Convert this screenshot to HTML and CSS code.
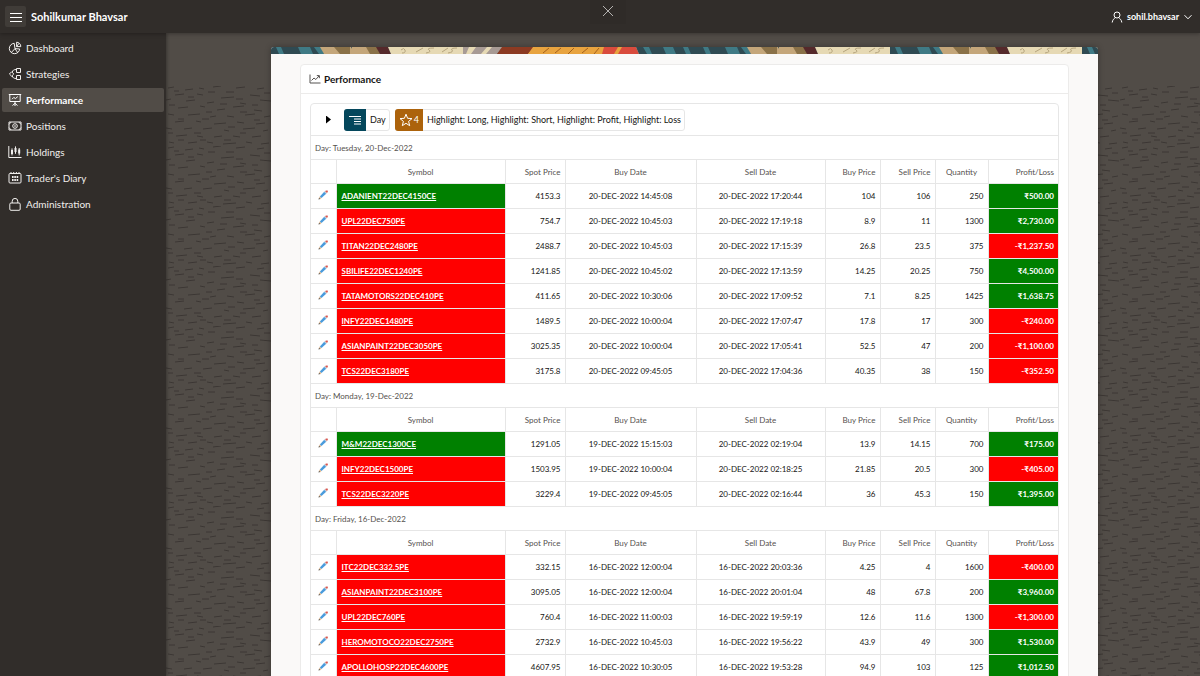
FILE: index.html
```
<!DOCTYPE html>
<html lang="en">
<head>
    <meta charset="UTF-8">
    <meta name="viewport" content="width=device-width, initial-scale=1.0">
    <title>Performance</title>
    <link rel="stylesheet" href="styles.css">
</head>
<body>

    <!-- Shared icons -->
    <svg class="sprite" aria-hidden="true">
        <symbol id="pencil" viewBox="0 0 10 10">
            <path d="M.4 9.6 1.1 7.4 2.6 8.9z" fill="#6b6258"/>
            <path d="M1.1 7.4 1.9 6.5 3.5 8.1 2.6 8.9z" fill="#e5b98a"/>
            <path d="M1.9 6.5 6.2 1.8 8.2 3.8 3.5 8.1z" fill="#4a9bdc"/>
            <path d="M6.2 1.8 7 1 9 3 8.2 3.8z" fill="#b9c3cc"/>
            <path d="M7 1Q8.2 0 9.4.6T9 3z" fill="#d9574f"/>
        </symbol>
    </svg>

    <!-- Header -->
    <header class="navbar">
        <button class="menu-btn" aria-label="Toggle menu">
            <svg viewBox="0 0 14 14"><path d="M1 3.5h12M1 7.5h12M1 11.5h12"/></svg>
        </button>
        <a class="logo" href="#">Sohilkumar Bhavsar</a>
        <button class="user-btn">
            <svg viewBox="0 0 12 12"><circle cx="6" cy="4" r="3"/><path d="M1.2 11.5C1.6 8.6 3 7.6 4.4 6.7M10.8 11.5C10.4 8.6 9 7.6 7.6 6.7"/></svg>
            sohil.bhavsar
            <svg class="caret" viewBox="0 0 10 10"><path d="M1.5 3.2 5 6.8 8.5 3.2"/></svg>
        </button>
        <button class="close-btn" aria-label="Close">
            <svg viewBox="0 0 12 12"><path d="M1 1 11 11M11 1 1 11"/></svg>
        </button>
    </header>

    <div class="layout">

        <!-- Sidebar -->
        <nav class="sidebar">
            <a href="#">
                <svg viewBox="0 0 14 14"><path d="M6.2 2.3A5.2 5.2 0 1 0 11.7 8L7 7.6zM7 7.6 3.4 11.4M7 7.6 9.8 11.9M8.6 1.2V5.6H12.8A4.3 4.3 0 0 0 8.6 1.2zM8.6 5.6 11 2.3"/></svg>
                Dashboard
            </a>
            <a href="#">
                <svg viewBox="0 0 14 14"><path d="M8.5 1.5h4v4h-4zM8.5 8.5h4v4h-4zM3.6 4.8 5.8 7 3.6 9.2 1.4 7zM4.3 5.2C4.6 3.2 5.8 2.5 8.5 2.5M4.3 8.8C4.6 10.8 5.8 11.5 8.5 11.5"/></svg>
                Strategies
            </a>
            <a href="#" class="active">
                <svg viewBox="0 0 14 14"><path d="M.8 1.5h12.4M1.8 1.5v7h10.4v-7M7 8.5v4.5M4.5 12.5 7 10.3l2.5 2.2M4 6.2 5.8 4.4 7.4 5.6 9.8 3.6"/></svg>
                Performance
            </a>
            <a href="#">
                <svg viewBox="0 0 14 14"><path d="M1 3h12v8H1zM1 5.4 3.2 3M13 5.4 10.8 3M1 8.6 3.2 11M13 8.6 10.8 11"/><circle cx="7" cy="7" r="2.3"/><path d="M7 6v2"/></svg>
                Positions
            </a>
            <a href="#">
                <svg viewBox="0 0 14 14"><path d="M.8 1v11.5h12.7M4 3.4v7M7.5 1.4v7.4M11.2 3v7.4"/><path class="solid" d="M3 5h2v4H3zM6.5 3h2v4h-2zM10.2 4.6h2v4h-2z"/></svg>
                Holdings
            </a>
            <a href="#">
                <svg viewBox="0 0 14 14"><rect x="1" y="2.5" width="12" height="9.5" rx="1"/><path d="M3 1v2M5.7 1v2M8.4 1v2M11 1v2"/><path d="M4 6h6.2M4 9h6.2" stroke-width="2" stroke-dasharray="1.6 .7"/></svg>
                Trader's Diary
            </a>
            <a href="#">
                <svg viewBox="0 0 14 14"><rect x="1.8" y="6" width="10.4" height="7.3" rx="1.2"/><path d="M4.2 6V4.2a2.8 2.8 0 0 1 5.6 0V6"/></svg>
                Administration
            </a>
        </nav>

        <!-- Main content -->
        <main class="main-content">
            <svg class="texture" aria-hidden="true">
                <defs>
                    <pattern id="dashes" width="106" height="60" patternUnits="userSpaceOnUse">
                        <path d="M2 2l6-1M19 4l8-1M33 2l5 1M47 1l8-1M70 2l9-1M91 3l7-1M9 9l9-1M31 8l6 1M55 12l13-1M84 9l10 1M0 14l5-1M20 15l9-1M41 17l7-1M74 17l6 1M94 14l11 1M12 22l10-1M34 20l5 1M51 24l8-1M67 21l11-1M88 24l8 1M2 28l6 1M22 29l12-1M44 31l6-1M61 30l7 1M79 29l10-1M98 31l6-1M9 36l9-1M30 35l5 1M48 38l12-1M71 36l7 1M90 38l9-1M0 42l6 1M18 43l8-1M37 43l9-1M58 44l5 1M77 43l12-1M97 45l5-1M10 50l11-1M31 50l6 1M48 51l8-1M67 50l7 1M86 51l9-1M3 56l5 1M22 57l9-1M41 56l6 1M57 58l13-1M80 56l6 1M95 58l8-1M8 5l5 0M42 6l7 0M60 6l8 0M98 7l6 0M22 11l6 0M70 13l7 0M54 18l7 0M86 19l6 0M3 19l6 0M40 26l6 0M74 26l7 0M12 33l6 0M36 33l7 0M88 34l6 0M62 41l7 0M28 47l7 0M74 47l6 0M2 47l5 0M58 54l7 0M34 54l6 0M12 54l6 0"/>
                    </pattern>
                </defs>
                <rect width="100%" height="100%" fill="url(#dashes)"/>
            </svg>

            <section class="dialog">
                <svg class="banner" aria-hidden="true">
                    <defs>
                        <pattern id="tribal" width="192" height="7" patternUnits="userSpaceOnUse">
                            <path fill="#2f4a52" d="M0 0h192v7H0z"/>
                            <path fill="#3f7a85" d="M5 0h5l3 7H8zM27 0h12l3 7H30zM43 0h7l3 7h-5z"/>
                            <path fill="#c4a67a" d="M49 0h31l4 7H53z"/>
                            <path fill="#8a7148" d="M63 0h16v7H69z"/>
                            <path fill="#c4a67a" d="M81 0h17l4 7H81z"/>
                            <path fill="#8a7148" d="M95 0h11l4 7h-11z"/>
                            <path fill="#55292b" d="M105 0h12l3 7h-11z"/>
                            <path fill="#e6d9b4" d="M117 0h75v7h-72z"/>
                            <path d="M130 3q3-3 4 0t-3 3M145 5l7-4M155 6q6-1 3-3t5-2M171 5l6-4M177 6q6-1 4-3t5-2" fill="none" stroke="#b5a47d"/>
                        </pattern>
                    </defs>
                    <rect width="100%" height="7" fill="url(#tribal)"/>
                    <path fill="#a79a94" d="M192 0h40l-6 7h-34z"/>
                    <path fill="#e6d9b4" d="M198 0h7l-5 7h-5zM216 0h5l-6 7h-5z"/>
                    <path fill="#8c3a22" d="M231 0h32l-6 7h-31z"/>
                    <path fill="#e8a33f" d="M262 0h72v7h-77z"/>
                    <path d="M272 6l6-5M284 6l6-5M297 7l6-6M311 6l6-5M323 7l5-6" stroke="#a4611d" fill="none"/>
                    <path fill="#d94b3d" d="M333 0h32l3 7h-37z"/>
                    <path fill="#e8a33f" d="M347 0h4l-4 7h-4z"/>
                    <!-- tile starts over to the right of the red piece -->
                    <path fill="#2f4a52" d="M365 0h64v7h-61z"/>
                    <path fill="#3f7a85" d="M372 0h6l3 7h-5zM392 0h10l3 7h-10zM412 0h5l3 7h-5z"/>
                    <svg x="427" width="192" height="7"><rect width="100%" height="7" fill="url(#tribal)"/></svg>
                    <svg x="619" width="100%" height="7"><rect width="100%" height="7" fill="url(#tribal)"/></svg>
                </svg>

                <div class="card">
                    <h1 class="card-title">
                        <svg viewBox="0 0 12 12"><path d="M1 1.5v8.5h10.5M2.5 7.5 5 5l1.8 1.5L10 3M7.8 2.6h2.6v2.6"/></svg>
                        Performance
                    </h1>

                    <div class="report">
                        <div class="report-controls">
                            <button class="expand-btn" aria-label="Expand report settings"></button>
                            <div class="chip">
                                <span class="chip-icon break">
                                    <svg viewBox="0 0 14 14"><path d="M1 3.5h12M6 6h7M6 8.5h7M6 11h7"/></svg>
                                </span>
                                <a href="#">Day</a>
                            </div>
                            <div class="chip">
                                <span class="chip-icon highlight">
                                    <svg viewBox="0 0 14 14"><path d="M7 1.2 8.6 5.3 13 5.6 9.6 8.4 10.7 12.7 7 10.3 3.3 12.7 4.4 8.4 1 5.6 5.4 5.3z"/></svg>
                                    4
                                </span>
                                <a href="#">Highlight: Long, Highlight: Short, Highlight: Profit, Highlight: Loss</a>
                            </div>
                        </div>

                        <table>
                            <colgroup>
                                <col class="col-edit">
                                <col class="col-symbol">
                                <col class="col-spot">
                                <col class="col-buy-date">
                                <col class="col-sell-date">
                                <col class="col-price">
                                <col class="col-price">
                                <col class="col-quantity">
                                <col class="col-profit">
                            </colgroup>
                            <tbody>
                                <tr class="day"><th colspan="9">Day: Tuesday, 20-Dec-2022</th></tr>
                                <tr class="head"><th></th><th>Symbol</th><th>Spot Price</th><th>Buy Date</th><th>Sell Date</th><th>Buy Price</th><th>Sell Price</th><th>Quantity</th><th>Profit/Loss</th></tr>
                                <tr><td><a href="#" aria-label="Edit"><svg><use href="#pencil"/></svg></a></td><td class="green"><a href="#">ADANIENT22DEC4150CE</a></td><td>4153.3</td><td>20-DEC-2022 14:45:08</td><td>20-DEC-2022 17:20:44</td><td>104</td><td>106</td><td>250</td><td class="green">₹500.00</td></tr>
                                <tr><td><a href="#" aria-label="Edit"><svg><use href="#pencil"/></svg></a></td><td class="red"><a href="#">UPL22DEC750PE</a></td><td>754.7</td><td>20-DEC-2022 10:45:03</td><td>20-DEC-2022 17:19:18</td><td>8.9</td><td>11</td><td>1300</td><td class="green">₹2,730.00</td></tr>
                                <tr><td><a href="#" aria-label="Edit"><svg><use href="#pencil"/></svg></a></td><td class="red"><a href="#">TITAN22DEC2480PE</a></td><td>2488.7</td><td>20-DEC-2022 10:45:03</td><td>20-DEC-2022 17:15:39</td><td>26.8</td><td>23.5</td><td>375</td><td class="red">-₹1,237.50</td></tr>
                                <tr><td><a href="#" aria-label="Edit"><svg><use href="#pencil"/></svg></a></td><td class="red"><a href="#">SBILIFE22DEC1240PE</a></td><td>1241.85</td><td>20-DEC-2022 10:45:02</td><td>20-DEC-2022 17:13:59</td><td>14.25</td><td>20.25</td><td>750</td><td class="green">₹4,500.00</td></tr>
                                <tr><td><a href="#" aria-label="Edit"><svg><use href="#pencil"/></svg></a></td><td class="red"><a href="#">TATAMOTORS22DEC410PE</a></td><td>411.65</td><td>20-DEC-2022 10:30:06</td><td>20-DEC-2022 17:09:52</td><td>7.1</td><td>8.25</td><td>1425</td><td class="green">₹1,638.75</td></tr>
                                <tr><td><a href="#" aria-label="Edit"><svg><use href="#pencil"/></svg></a></td><td class="red"><a href="#">INFY22DEC1480PE</a></td><td>1489.5</td><td>20-DEC-2022 10:00:04</td><td>20-DEC-2022 17:07:47</td><td>17.8</td><td>17</td><td>300</td><td class="red">-₹240.00</td></tr>
                                <tr><td><a href="#" aria-label="Edit"><svg><use href="#pencil"/></svg></a></td><td class="red"><a href="#">ASIANPAINT22DEC3050PE</a></td><td>3025.35</td><td>20-DEC-2022 10:00:04</td><td>20-DEC-2022 17:05:41</td><td>52.5</td><td>47</td><td>200</td><td class="red">-₹1,100.00</td></tr>
                                <tr><td><a href="#" aria-label="Edit"><svg><use href="#pencil"/></svg></a></td><td class="red"><a href="#">TCS22DEC3180PE</a></td><td>3175.8</td><td>20-DEC-2022 09:45:05</td><td>20-DEC-2022 17:04:36</td><td>40.35</td><td>38</td><td>150</td><td class="red">-₹352.50</td></tr>
                            </tbody>
                            <tbody>
                                <tr class="day"><th colspan="9">Day: Monday, 19-Dec-2022</th></tr>
                                <tr class="head"><th></th><th>Symbol</th><th>Spot Price</th><th>Buy Date</th><th>Sell Date</th><th>Buy Price</th><th>Sell Price</th><th>Quantity</th><th>Profit/Loss</th></tr>
                                <tr><td><a href="#" aria-label="Edit"><svg><use href="#pencil"/></svg></a></td><td class="green"><a href="#">M&amp;M22DEC1300CE</a></td><td>1291.05</td><td>19-DEC-2022 15:15:03</td><td>20-DEC-2022 02:19:04</td><td>13.9</td><td>14.15</td><td>700</td><td class="green">₹175.00</td></tr>
                                <tr><td><a href="#" aria-label="Edit"><svg><use href="#pencil"/></svg></a></td><td class="red"><a href="#">INFY22DEC1500PE</a></td><td>1503.95</td><td>19-DEC-2022 10:00:04</td><td>20-DEC-2022 02:18:25</td><td>21.85</td><td>20.5</td><td>300</td><td class="red">-₹405.00</td></tr>
                                <tr><td><a href="#" aria-label="Edit"><svg><use href="#pencil"/></svg></a></td><td class="red"><a href="#">TCS22DEC3220PE</a></td><td>3229.4</td><td>19-DEC-2022 09:45:05</td><td>20-DEC-2022 02:16:44</td><td>36</td><td>45.3</td><td>150</td><td class="green">₹1,395.00</td></tr>
                            </tbody>
                            <tbody>
                                <tr class="day"><th colspan="9">Day: Friday, 16-Dec-2022</th></tr>
                                <tr class="head"><th></th><th>Symbol</th><th>Spot Price</th><th>Buy Date</th><th>Sell Date</th><th>Buy Price</th><th>Sell Price</th><th>Quantity</th><th>Profit/Loss</th></tr>
                                <tr><td><a href="#" aria-label="Edit"><svg><use href="#pencil"/></svg></a></td><td class="red"><a href="#">ITC22DEC332.5PE</a></td><td>332.15</td><td>16-DEC-2022 12:00:04</td><td>16-DEC-2022 20:03:36</td><td>4.25</td><td>4</td><td>1600</td><td class="red">-₹400.00</td></tr>
                                <tr><td><a href="#" aria-label="Edit"><svg><use href="#pencil"/></svg></a></td><td class="red"><a href="#">ASIANPAINT22DEC3100PE</a></td><td>3095.05</td><td>16-DEC-2022 12:00:04</td><td>16-DEC-2022 20:01:04</td><td>48</td><td>67.8</td><td>200</td><td class="green">₹3,960.00</td></tr>
                                <tr><td><a href="#" aria-label="Edit"><svg><use href="#pencil"/></svg></a></td><td class="red"><a href="#">UPL22DEC760PE</a></td><td>760.4</td><td>16-DEC-2022 11:00:03</td><td>16-DEC-2022 19:59:19</td><td>12.6</td><td>11.6</td><td>1300</td><td class="red">-₹1,300.00</td></tr>
                                <tr><td><a href="#" aria-label="Edit"><svg><use href="#pencil"/></svg></a></td><td class="red"><a href="#">HEROMOTOCO22DEC2750PE</a></td><td>2732.9</td><td>16-DEC-2022 10:45:03</td><td>16-DEC-2022 19:56:22</td><td>43.9</td><td>49</td><td>300</td><td class="green">₹1,530.00</td></tr>
                                <tr><td><a href="#" aria-label="Edit"><svg><use href="#pencil"/></svg></a></td><td class="red"><a href="#">APOLLOHOSP22DEC4600PE</a></td><td>4607.95</td><td>16-DEC-2022 10:30:05</td><td>16-DEC-2022 19:53:28</td><td>94.9</td><td>103</td><td>125</td><td class="green">₹1,012.50</td></tr>
                            </tbody>
                        </table>
                    </div>
                </div>
            </section>
        </main>
    </div>

</body>
</html>
```
FILE: styles.css
```
* {
    margin: 0;
    padding: 0;
    box-sizing: border-box;
}

:root {
    --dark: #312d2a;
    --dark-active: #514c47;
    --border: #e6e6e6;
    --green: #008000;
    --red: #ff0000;
}

body {
    display: flex;
    flex-direction: column;
    height: 100vh;
    overflow: hidden;
    background-color: var(--dark-active);
    font-family: Lato, "Open Sans", sans-serif;
    font-size: 9px;
    color: #161513;
}

a {
    color: inherit;
    text-decoration: none;
}

button {
    font: inherit;
    color: inherit;
    background: none;
    border: none;
    cursor: pointer;
}

svg {
    flex: none;
    fill: none;
    stroke: currentColor;
}

.sprite {
    display: none;
}

/* Header */
.navbar {
    position: relative;
    z-index: 2;
    display: flex;
    align-items: center;
    height: 33px;
    padding: 0 7px 0 5px;
    background-color: var(--dark);
    color: white;
    box-shadow: 0 1px 4px rgba(0, 0, 0, 0.3);
}

.menu-btn {
    display: flex;
    align-items: center;
    justify-content: center;
    width: 21px;
    height: 21px;
    border-radius: 2px;
    background-color: #403c38;
}

.menu-btn svg {
    width: 14px;
    height: 14px;
}

.logo {
    margin-left: 5px;
    font-size: 11px;
    font-weight: 700;
}

.user-btn {
    display: flex;
    align-items: center;
    gap: 4px;
    margin-left: auto;
    font-weight: 700;
}

.user-btn svg {
    width: 12px;
    height: 12px;
}

.user-btn .caret {
    width: 10px;
    height: 10px;
}

.close-btn {
    position: absolute;
    top: 0;
    left: 50%;
    width: 36px;
    height: 24px;
    margin-left: -10px;
    color: #b5b3b1;
    background-color: #2f2b28;
}

.close-btn svg {
    width: 12px;
    height: 12px;
}

.layout {
    display: flex;
    flex: 1;
    min-height: 0;
}

/* Sidebar */
.sidebar {
    position: relative;
    z-index: 1;
    display: flex;
    flex-direction: column;
    gap: 2px;
    flex: none;
    width: 166px;
    padding: 3px 2px 0;
    background-color: var(--dark);
    color: #f1efed;
    font-size: 10px;
    box-shadow: 1px 0 3px rgba(0, 0, 0, 0.3);
}

.sidebar a {
    display: flex;
    align-items: center;
    gap: 4px;
    height: 24px;
    padding: 0 6px;
    border-radius: 2px;
}

.sidebar a.active {
    background-color: var(--dark-active);
    color: white;
    font-weight: 700;
}

.sidebar svg {
    width: 14px;
    height: 14px;
}

.sidebar .solid {
    fill: currentColor;
    stroke: none;
}

/* Main content */
.main-content {
    position: relative;
    flex: 1;
    padding: 14px 102px 0 105px;
    overflow-y: auto;
    scrollbar-width: none;
}

.texture {
    position: absolute;
    top: 53px;
    left: 0;
    width: 100%;
    height: calc(100% - 53px);
    stroke: none;
}

.texture pattern {
    stroke: #3b3633;
}

.dialog {
    position: relative;
    background-color: #faf9f8;
    border-radius: 3px 3px 0 0;
    overflow: hidden;
    box-shadow: 0 0 6px rgba(0, 0, 0, 0.3);
}

.banner {
    display: block;
    width: 100%;
    height: 7px;
    stroke: none;
}

.banner svg {
    stroke: none;
}

.card {
    margin: 10px 29px 0;
    background-color: white;
    border: 1px solid #ecebea;
    border-radius: 4px;
}

.card-title {
    display: flex;
    align-items: center;
    gap: 3px;
    height: 29px;
    padding: 0 8px;
    border-bottom: 1px solid #ecebea;
    font-size: 10px;
    font-weight: 700;
}

.card-title svg {
    width: 12px;
    height: 12px;
    stroke: #555250;
}

.report {
    margin: 9px;
    border: 1px solid var(--border);
    border-radius: 4px 4px 0 0;
}

.report-controls {
    display: flex;
    align-items: center;
    gap: 5px;
    height: 31px;
    padding-left: 15px;
}

.expand-btn {
    width: 5px;
    height: 8px;
    margin-right: 8px;
    background-color: #000;
    clip-path: polygon(0 0, 100% 50%, 0 100%);
}

.chip {
    display: flex;
    align-items: center;
    height: 22px;
    padding-right: 3px;
    border: 1px solid var(--border);
    border-radius: 3px;
}

.chip-icon {
    display: flex;
    align-items: center;
    gap: 1px;
    height: 22px;
    margin: -1px 4px -1px -1px;
    padding: 0 4px;
    border-radius: 3px 0 0 3px;
    color: white;
}

.chip-icon svg {
    width: 14px;
    height: 14px;
}

.chip-icon.break {
    background-color: #04475c;
}

.chip-icon.highlight {
    background-color: #ac630c;
}

/* Report table */
table {
    width: 100%;
    table-layout: fixed;
    border-collapse: collapse;
    font-size: 8px;
}

.col-edit {
    width: 25px;
}

.col-symbol {
    width: 169px;
}

.col-spot {
    width: 60px;
}

.col-buy-date {
    width: 131px;
}

.col-sell-date {
    width: 129px;
}

.col-price {
    width: 55px;
}

.col-quantity {
    width: 53px;
}

th,
td {
    height: 25px;
    padding: 0 4px;
    border-top: 1px solid var(--border);
    border-left: 1px solid var(--border);
    text-align: right;
    white-space: nowrap;
}

th:first-child,
td:first-child {
    border-left: none;
}

th {
    height: 24px;
    color: #55514e;
    font-weight: 400;
}

.day th {
    text-align: left;
}

td:first-child,
.head th:nth-child(2),
th:nth-child(4),
th:nth-child(5),
th:nth-child(8),
td:nth-child(4),
td:nth-child(5) {
    text-align: center;
}

td:nth-child(2) {
    padding-left: 5px;
    text-align: left;
}

td:nth-child(2) a {
    font-weight: 700;
    text-decoration: underline;
}

td svg {
    width: 10px;
    height: 10px;
    stroke: none;
}

.green {
    background-color: var(--green);
    color: white;
}

.red {
    background-color: var(--red);
    color: white;
}

.green,
.red {
    font-weight: 700;
}
```
